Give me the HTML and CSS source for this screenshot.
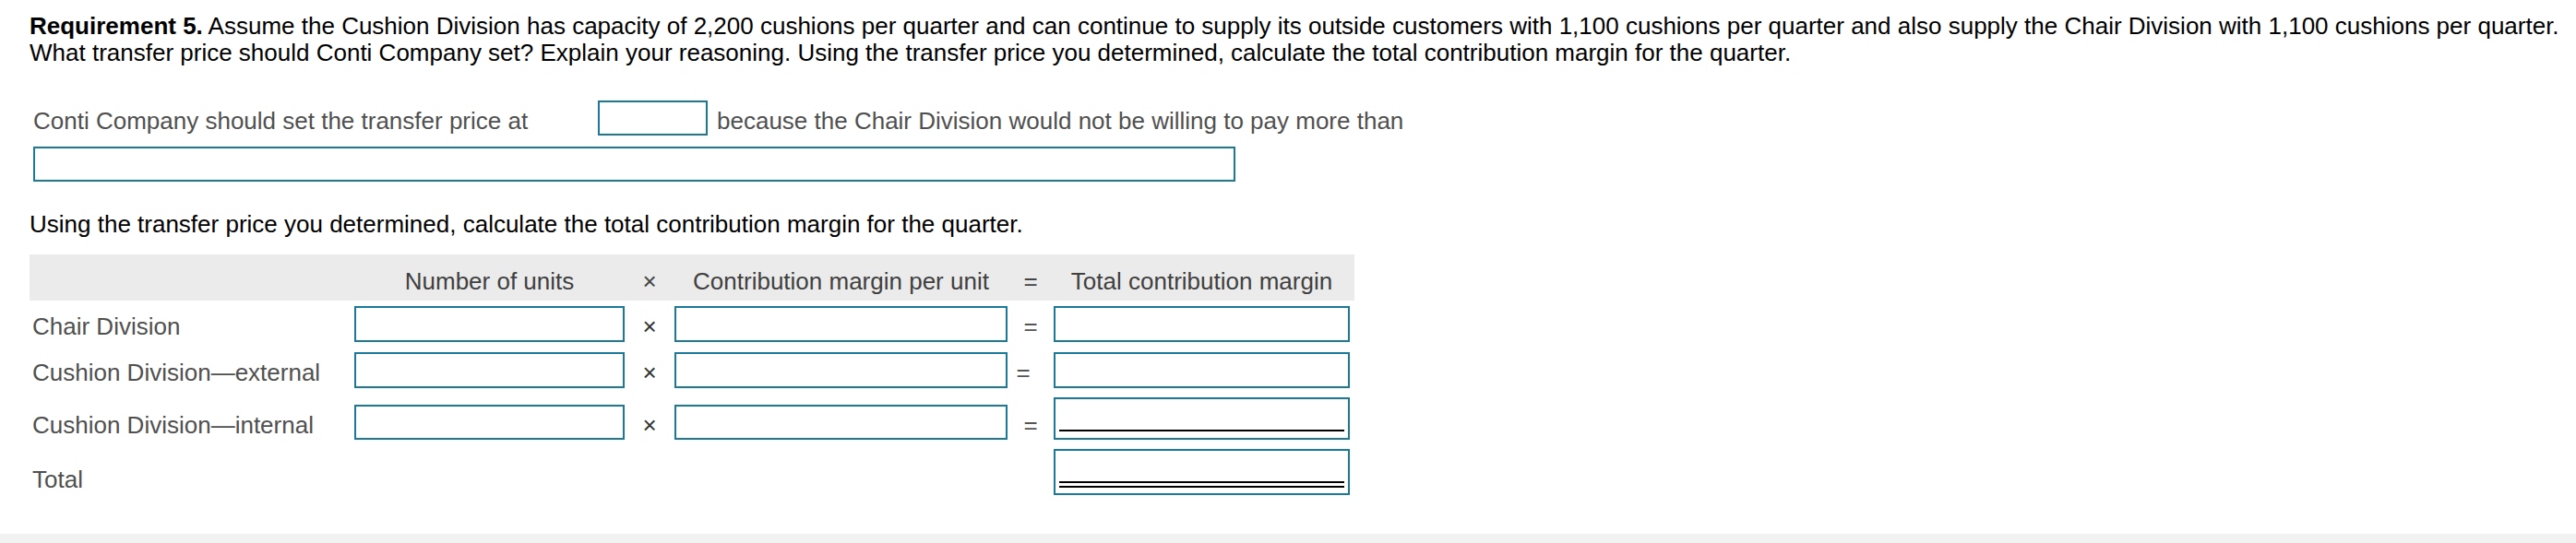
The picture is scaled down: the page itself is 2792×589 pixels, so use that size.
FILE: index.html
```html
<!DOCTYPE html>
<html>
<head>
<meta charset="utf-8">
<link rel="stylesheet" href="styles.css">
</head>
<body>
<div class="page">
  <p class="req"><b>Requirement 5.</b> Assume the Cushion Division has capacity of 2,200 cushions per quarter and can continue to supply its outside customers with 1,100 cushions per quarter and also supply the Chair Division with 1,100 cushions per quarter.<br>What transfer price should Conti Company set? Explain your reasoning. Using the transfer price you determined, calculate the total contribution margin for the quarter.</p>

  <div class="answer">
    <div class="answer-line">
      <span class="lead">Conti Company should set the transfer price at</span>
      <span class="box small"></span>
      <span class="txt">because the Chair Division would not be willing to pay more than</span>
    </div>
    <div class="box wide"></div>
  </div>

  <p class="instr">Using the transfer price you determined, calculate the total contribution margin for the quarter.</p>

  <div class="grid">
    <div class="hd"></div>
    <div class="hd c">Number of units</div>
    <div class="hd c op">×</div>
    <div class="hd c">Contribution margin per unit</div>
    <div class="hd c eq">=</div>
    <div class="hd c last">Total contribution margin</div>

    <div class="cell r1"><div class="lbl">Chair Division</div></div>
    <div class="cell r1"><div class="box in"></div></div>
    <div class="cell r1"><div class="sym op">×</div></div>
    <div class="cell r1"><div class="box in"></div></div>
    <div class="cell r1"><div class="sym eq">=</div></div>
    <div class="cell r1"><div class="box in out"></div></div>

    <div class="cell r2"><div class="lbl">Cushion Division—external</div></div>
    <div class="cell r2"><div class="box in"></div></div>
    <div class="cell r2"><div class="sym op">×</div></div>
    <div class="cell r2"><div class="box in"></div></div>
    <div class="cell r2"><div class="sym eq shift">=</div></div>
    <div class="cell r2"><div class="box in out"></div></div>

    <div class="cell r3"><div class="lbl s38">Cushion Division—internal</div></div>
    <div class="cell r3"><div class="box in s38"></div></div>
    <div class="cell r3"><div class="sym op s38">×</div></div>
    <div class="cell r3"><div class="box in s38"></div></div>
    <div class="cell r3"><div class="sym eq s38">=</div></div>
    <div class="cell r3"><div class="box out sub"><div class="rule"></div></div></div>

    <div class="cell r4"><div class="lbl total">Total</div></div>
    <div class="cell r4"></div>
    <div class="cell r4"></div>
    <div class="cell r4"></div>
    <div class="cell r4"></div>
    <div class="cell r4"><div class="box out grand"><div class="rule dbl"></div></div></div>
  </div>
</div>
<div class="band"></div>
</body>
</html>
```

FILE: styles.css
```css
html, body {
  margin: 0;
  padding: 0;
  background: #fff;
}
body {
  height: 589px;
  display: flex;
  flex-direction: column;
  font-family: "Liberation Sans", Arial, Helvetica, sans-serif;
  font-size: 26px;
  line-height: 25px;
  color: #000;
}
.page {
  padding: 14px 0 0 32px;
}
.req {
  margin: 0;
  line-height: 29px;
  color: #000;
}
.answer {
  margin-top: 37px;
  padding-left: 4px;
}
.answer-line {
  display: flex;
  align-items: center;
  height: 38px;
  color: #505050;
}
.answer-line .lead {
  flex: 0 0 612px;
  padding-top: 6px;
}
.answer-line .txt {
  padding-top: 6px;
}
.box {
  box-sizing: border-box;
  border: 2px solid #1b7a9a;
  background: #fff;
}
.box.small {
  width: 119px;
  height: 38px;
  margin-right: 10px;
}
.box.wide {
  width: 1303px;
  height: 38px;
  margin-top: 12px;
}
.instr {
  margin: 34px 0 0 0;
  color: #000;
}
.grid {
  margin-top: 20px;
  display: grid;
  grid-template-columns: 352px 293px 54px 361px 50px 326px;
  grid-template-rows: 50px 45px 50px 56px 60px;
  width: 1436px;
}
.hd {
  background: #ebebeb;
  color: #404040;
  display: flex;
  align-items: flex-end;
  padding-bottom: 8px;
  box-sizing: border-box;
}
.hd.c {
  justify-content: center;
}
.hd.last {
  padding-right: 5px;
}
.hd.op, .hd.eq {
  color: #444;
}
.cell {
  display: flex;
  flex-direction: column;
  justify-content: flex-end;
}
.box.in {
  height: 39px;
}
.box.in.s38 {
  height: 38px;
}
.box.out {
  width: 321px;
}
.out.sub {
  height: 46px;
  display: flex;
  align-items: flex-end;
  padding: 0 4px 7px 4px;
}
.out.grand {
  height: 50px;
  display: flex;
  align-items: flex-end;
  padding: 0 4px 6px 4px;
}
.rule {
  flex: 1;
  border-bottom: 2px solid #000;
}
.rule.dbl {
  border-bottom: 7px double #000;
}
.lbl {
  height: 39px;
  display: flex;
  align-items: center;
  padding: 6px 0 0 3px;
  box-sizing: border-box;
  color: #505050;
}
.lbl.s38 {
  height: 38px;
}
.lbl.total {
  height: 50px;
  padding-top: 16px;
}
.sym {
  height: 39px;
  display: flex;
  align-items: center;
  justify-content: center;
  padding-top: 6px;
  box-sizing: border-box;
}
.sym.s38 {
  height: 38px;
}
.sym.op {
  color: #333;
}
.sym.eq {
  color: #555;
}
.sym.shift {
  padding-right: 16px;
}
.band {
  margin-top: auto;
  height: 10px;
  background: #f2f2f2;
}
```
